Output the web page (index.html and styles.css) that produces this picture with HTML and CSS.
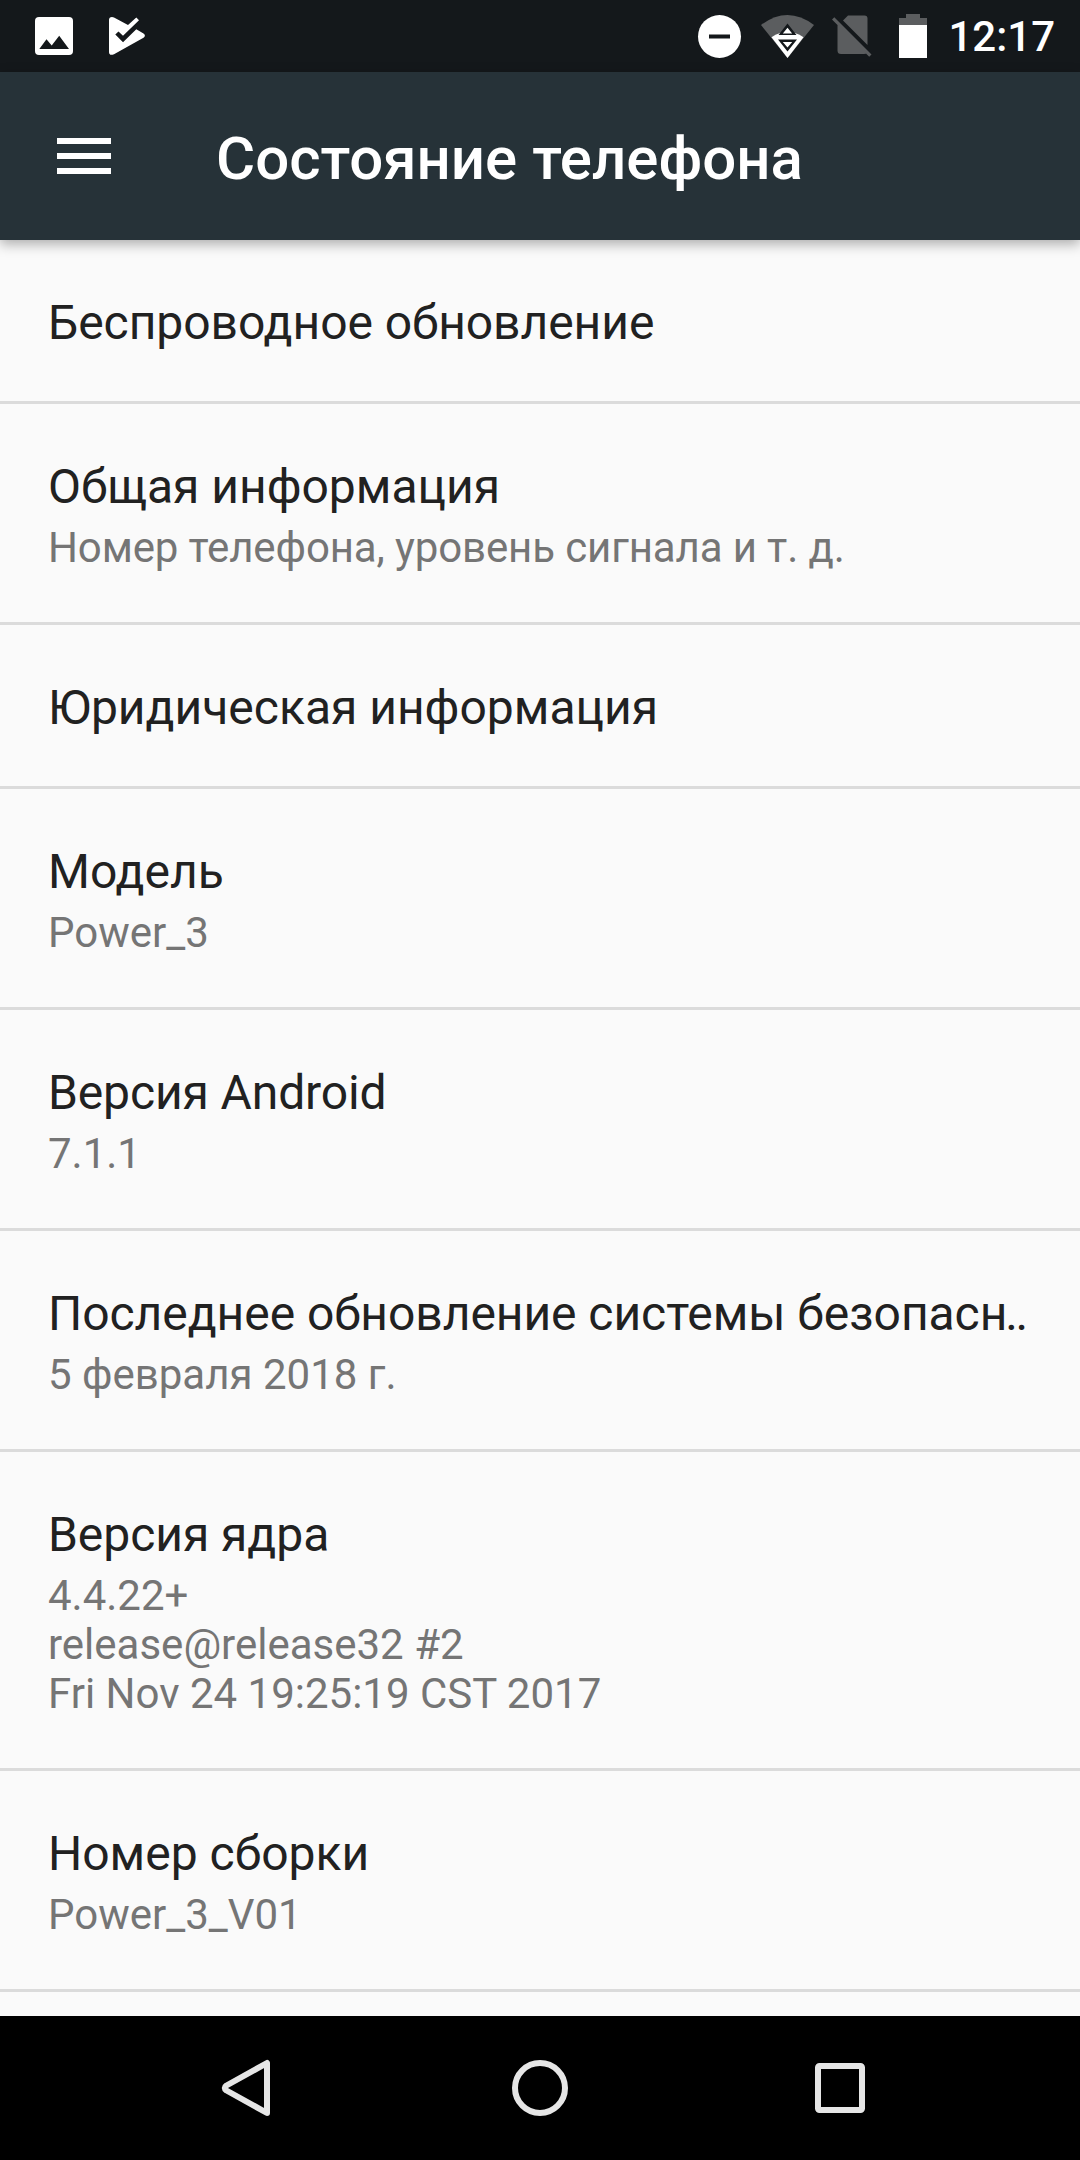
FILE: index.html
```html
<!DOCTYPE html>
<html lang="ru">
<head>
<meta charset="utf-8">
<title>Состояние телефона</title>
<link rel="stylesheet" href="styles.css">
</head>
<body>
<div class="screen">
  <div class="status-bar">
    <svg class="icon-image" width="38" height="38" viewBox="0 0 38 38"><rect width="38" height="38" rx="4" fill="#fff"/><path d="M4.300 32L11.500 22.300L16.700 28.500L24.200 18.700L34 32Z" fill="#14181b"/></svg>
    <svg class="icon-play" width="36" height="38" viewBox="0 0 36 38"><path d="M0 3Q0 0 3 0L5 .6L19 8L27.300 .5L30 3.200L14 18.800L9.500 14.500L6.300 17.600L14 25.200L27.300 12.300L34.500 16.500Q37.300 18.600 34.500 20.800L5 37.300Q0 39 0 35Z" fill="#fff"/></svg>
    <div class="status-right">
      <svg width="43" height="43" viewBox="0 0 43 43"><circle cx="21.500" cy="21.500" r="21.500" fill="#fff"/><rect x="11" y="19.500" width="21" height="4" fill="#14181b"/></svg>
      <svg class="icon-wifi" width="53" height="43" viewBox="0 0 53 43"><path d="M0 10Q26.500 -10 53 10L26.500 43Z" fill="#5b5d5f"/><path d="M10.500 22.200Q26.500 12 42.500 22.200L26.500 43Z" fill="#fff"/><path d="M26.500 8.500L35.500 20H17.500Z M17 24.500H36L26.500 36.500Z" fill="#14181b"/><path d="M26.500 12.800L31.200 18.500H21.800Z M21.800 27H31.200L26.500 32.500Z" fill="#fff"/></svg>
      <svg class="icon-sim" width="40" height="42" viewBox="0 0 40 42"><path d="M11 5.500L16 .5H32.500Q35.500 .5 35.500 3.500V30Z M5.500 8L35 37.500Q34.500 39 32 39H9Q5.500 39 5.500 35.500Z M2.300 2.300L39.500 39.500L37.200 41.800L0 4.600Z" fill="#5b5d5f"/></svg>
      <svg class="icon-battery" width="28" height="44" viewBox="0 0 28 44"><path d="M0 4H7V0H21V4H28V12H0Z" fill="#5b5d5f"/><path d="M0 11H28V44H0Z" fill="#fff"/></svg>
      <span class="clock">12:17</span>
    </div>
  </div>
  <header class="app-bar">
    <svg width="54" height="36" viewBox="0 0 54 36"><path d="M0 0H54V6H0Z M0 15H54V21H0Z M0 30H54V36H0Z" fill="#fff"/></svg>
    <h1 class="app-title">Состояние телефона</h1>
  </header>
  <main class="list">
    <section class="row"><div class="title snug">Беспроводное обновление</div></section>
    <section class="row"><div class="title">Общая информация</div><div class="summary tight">Номер телефона, уровень сигнала и т. д.</div></section>
    <section class="row"><div class="title">Юридическая информация</div></section>
    <section class="row"><div class="title">Модель</div><div class="summary">Power_3</div></section>
    <section class="row"><div class="title tight">Версия Android</div><div class="summary">7.1.1</div></section>
    <section class="row"><div class="title snug">Последнее обновление системы безопас<span class="dots">н..</span></div><div class="summary">5 февраля 2018 г.</div></section>
    <section class="row"><div class="title snug">Версия ядра</div><div class="summary">4.4.22+<br>release@release32 #2<br>Fri Nov 24 19:25:19 CST 2017</div></section>
    <section class="row"><div class="title">Номер сборки</div><div class="summary">Power_3_V01</div></section>
  </main>
  <nav class="nav-bar">
    <svg width="60" height="60" viewBox="0 0 60 60"><path d="M57 5V55L16.500 32.500Q13 30 16.500 27.500Z" fill="none" stroke="#e6e6e6" stroke-width="6" stroke-linejoin="round"/></svg>
    <svg width="60" height="60" viewBox="0 0 60 60"><circle cx="30" cy="30" r="25" fill="none" stroke="#e6e6e6" stroke-width="6"/></svg>
    <svg width="60" height="60" viewBox="0 0 60 60"><rect x="8" y="8" width="44" height="44" rx="1.500" fill="none" stroke="#e6e6e6" stroke-width="6"/></svg>
  </nav>
</div>
</body>
</html>
```
FILE: styles.css
```css
body {
  margin: 0;
  font-family: Roboto, sans-serif;
}
.screen {
  display: flex;
  flex-direction: column;
  width: 1080px;
  height: 2160px;
  overflow: hidden;
  background: #fafafa;
}
svg {
  display: block;
  flex: none;
  overflow: visible;
}
.status-bar {
  display: flex;
  flex: none;
  align-items: center;
  box-sizing: border-box;
  height: 72px;
  padding: 0 25px 0 35px;
  background: #14181b;
}
.icon-play {
  margin-left: 36px;
}
.status-right {
  display: flex;
  align-items: center;
  margin-left: auto;
}
.icon-wifi {
  margin-left: 20px;
}
.icon-sim {
  margin-left: 18px;
}
.icon-battery {
  margin-left: 27px;
}
.clock {
  margin-left: 21px;
  padding-top: 2px;
  color: #fff;
  font-size: 42px;
  font-weight: 500;
  line-height: 50px;
}
.app-bar {
  display: flex;
  flex: none;
  align-items: center;
  box-sizing: border-box;
  height: 168px;
  padding: 0 57px;
  background: #263238;
  box-shadow: 0 4px 12px rgba(0, 0, 0, .32);
  z-index: 1;
}
.app-title {
  margin: 5px 0 0 105px;
  color: #fff;
  font-size: 60px;
  font-weight: 500;
  line-height: 70px;
}
.list {
  flex: 1;
  overflow: hidden;
}
.row {
  padding: 55px 48px 50px;
  border-bottom: 3px solid #dbdbdb;
}
.title {
  color: #212121;
  font-size: 48px;
  line-height: 56px;
  white-space: nowrap;
}
.summary {
  padding-top: 8px;
  color: #757575;
  font-size: 42px;
  line-height: 49px;
}
.snug {
  letter-spacing: -.05px;
}
.tight {
  letter-spacing: -.12px;
}
.dots {
  letter-spacing: -2.2px;
}
.nav-bar {
  display: flex;
  flex: none;
  align-items: center;
  justify-content: center;
  gap: 240px;
  height: 144px;
  background: #000;
}
```
